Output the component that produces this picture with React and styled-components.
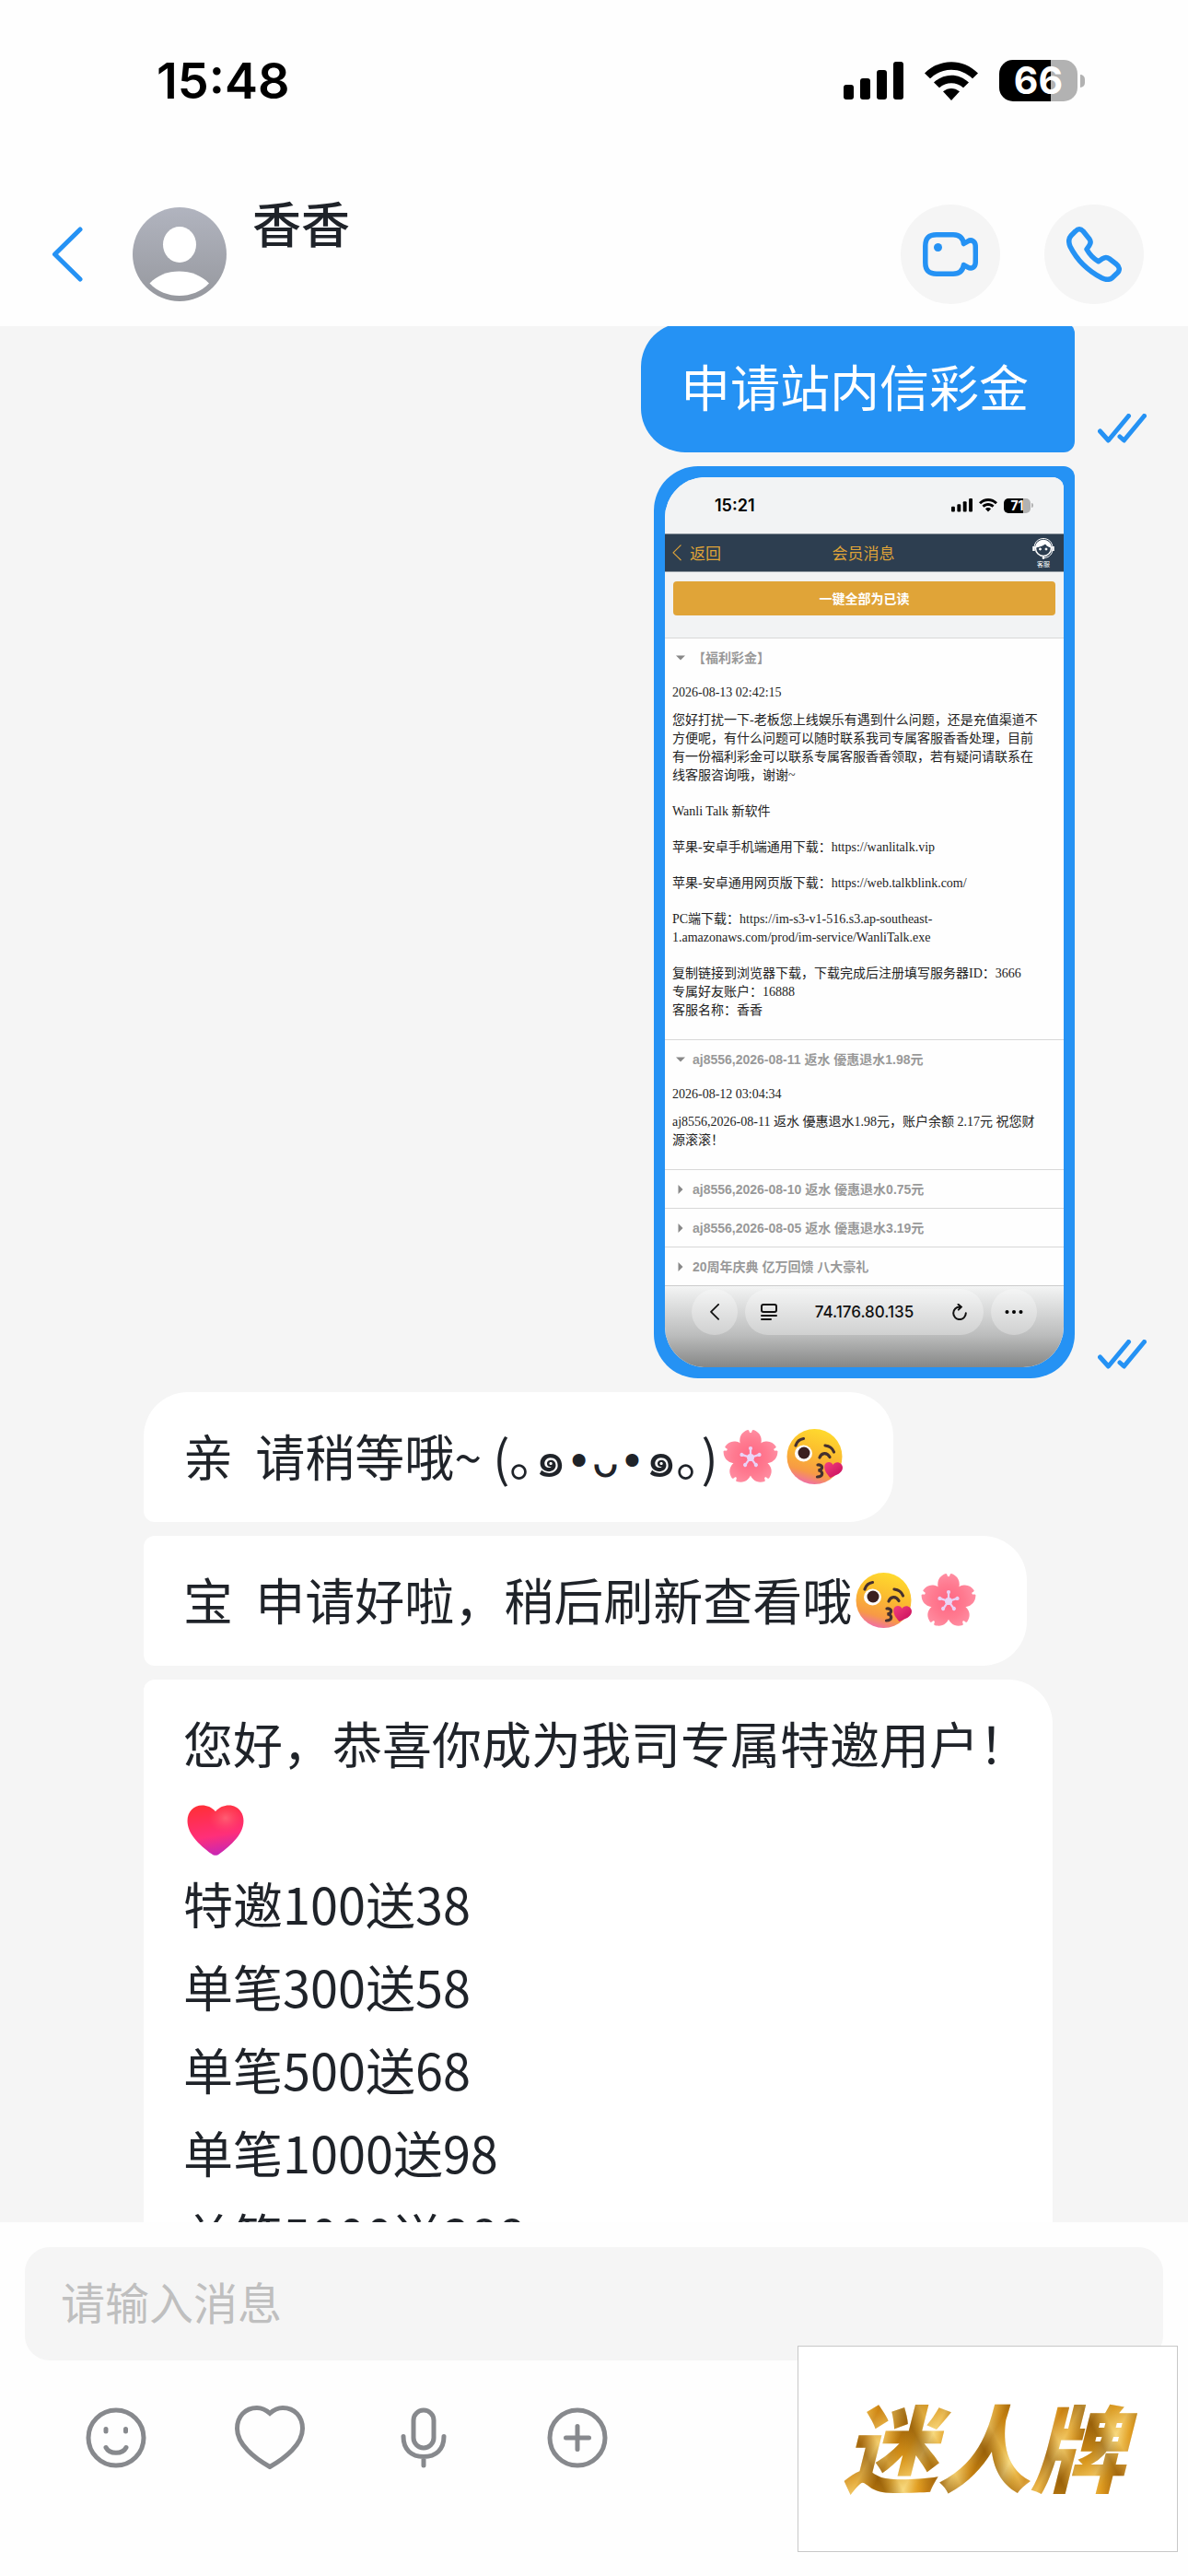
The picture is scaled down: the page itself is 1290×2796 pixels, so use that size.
import React, { useLayoutEffect, useRef, useState } from 'react';
import styled, { createGlobalStyle } from 'styled-components';

const BLUE = '#2592f4';

const sections = [
  {
    title: '【福利彩金】',
    date: '2026-08-13 02:42:15',
    paragraphs: [
      [
        '您好打扰一下-老板您上线娱乐有遇到什么问题，还是充值渠道不',
        '方便呢，有什么问题可以随时联系我司专属客服香香处理，目前',
        '有一份福利彩金可以联系专属客服香香领取，若有疑问请联系在',
        '线客服咨询哦，谢谢~',
      ],
      ['Wanli Talk 新软件'],
      ['苹果-安卓手机端通用下载：https://wanlitalk.vip'],
      ['苹果-安卓通用网页版下载：https://web.talkblink.com/'],
      [
        'PC端下载：https://im-s3-v1-516.s3.ap-southeast-',
        '1.amazonaws.com/prod/im-service/WanliTalk.exe',
      ],
      [
        '复制链接到浏览器下载，下载完成后注册填写服务器ID：3666',
        '专属好友账户：16888',
        '客服名称：香香',
      ],
    ],
  },
  {
    title: 'aj8556,2026-08-11 返水 優惠退水1.98元',
    date: '2026-08-12 03:04:34',
    paragraphs: [
      [
        'aj8556,2026-08-11 返水 優惠退水1.98元，账户余额 2.17元 祝您财',
        '源滚滚！',
      ],
    ],
  },
  { title: 'aj8556,2026-08-10 返水 優惠退水0.75元' },
  { title: 'aj8556,2026-08-05 返水 優惠退水3.19元' },
  { title: '20周年庆典 亿万回馈 八大豪礼' },
];

const offers = [
  '特邀100送38',
  '单笔300送58',
  '单笔500送68',
  '单笔1000送98',
  '单笔5000送288',
];

const Signal = ({ width }) => (
  <svg width={width} viewBox="0 0 65 41" aria-hidden="true">
    <rect x="0" y="25" width="11" height="16" rx="3" />
    <rect x="18" y="18" width="11" height="23" rx="3" />
    <rect x="36" y="9" width="11" height="32" rx="3" />
    <rect x="54" y="0" width="11" height="41" rx="3" />
  </svg>
);

const Wifi = ({ width }) => (
  <svg width={width} viewBox="0 0 58 42" aria-hidden="true">
    <path d="M0 12.5C16 -4 42 -4 58 12.5L52 18.3C39 5.5 19 5.5 6 18.3Z" />
    <path d="M10 22.5C21 12 37 12 48 22.5L42 28.3C34.500 21.5 23.500 21.5 16 28.3Z" />
    <path d="M20 32.3C25.500 27.800 32.500 27.800 38 32.300L29 42Z" />
  </svg>
);

const Chevron = ({ width, stroke }) => (
  <svg width={width} viewBox="0 0 34 60" fill="none" aria-hidden="true">
    <path
      d="M31 3L3.500 30L31 57"
      stroke="currentColor"
      strokeWidth={stroke}
      strokeLinecap="round"
      strokeLinejoin="round"
    />
  </svg>
);

const Ticks = () => (
  <TickIcon viewBox="0 0 53 32" aria-label="已读">
    <path d="M2.500 19L11.500 29L33.500 2.500M24 25L28.500 29L50.500 2.500" />
  </TickIcon>
);

const AvatarIcon = () => (
  <svg width="102" height="102" viewBox="0 0 102 102" aria-hidden="true">
    <defs>
      <linearGradient id="avatar" x1="0" y1="0" x2="0" y2="1">
        <stop offset="0" stopColor="#b1b4bf" />
        <stop offset="1" stopColor="#96989e" />
      </linearGradient>
    </defs>
    <circle cx="51" cy="51" r="51" fill="url(#avatar)" />
    <ellipse cx="51" cy="40.500" rx="18" ry="19.500" fill="#fff" />
    <path
      d="M18.500 82.500C34 65 67 65 83 82.500C66 100.500 35.500 100.500 18.500 82.500Z"
      fill="#fff"
    />
  </svg>
);

const Flower = () => (
  <Emoji viewBox="0 0 60 60" role="img" aria-label="🌸">
    <defs>
      <radialGradient id="petal" gradientUnits="userSpaceOnUse" cx="30" cy="31" r="30">
        <stop offset="0" stopColor="#ff6583" />
        <stop offset="0.6" stopColor="#ff7a90" />
        <stop offset="1" stopColor="#ff8da2" />
      </radialGradient>
    </defs>
    {[0, 72, 144, 216, 288].map((angle) => (
      <path
        key={angle}
        transform={`rotate(${angle} 30 31)`}
        d="M30 33C22 25 17 17 18.500 10C19.500 5 23 2.500 27 1C28 0.800 28.500 2 28.800 3.500C29.400 4.600 30.600 4.600 31.200 3.500C31.500 2 32 0.800 33 1C37 2.500 40.500 5 41.500 10C43 17 38 25 30 33Z"
        fill="url(#petal)"
      />
    ))}
    <g stroke="#e9d3f7" strokeWidth="2.200" fill="#ead6f8">
      {[0, 72, 144, 216, 288].map((angle) => (
        <g key={angle} transform={`rotate(${angle} 30 31)`}>
          <path d="M30 31V21" />
          <circle cx="30" cy="21" r="1" />
        </g>
      ))}
      <circle cx="30" cy="31" r="4" stroke="none" />
    </g>
  </Emoji>
);

const Kiss = () => (
  <Emoji viewBox="0 0 62 60" role="img" aria-label="😘">
    <defs>
      <linearGradient id="face" x1="0.7" y1="0" x2="0.4" y2="1">
        <stop offset="0" stopColor="#ffdc2e" />
        <stop offset="0.45" stopColor="#fbbb2f" />
        <stop offset="0.8" stopColor="#f79a45" />
        <stop offset="1" stopColor="#f06fa5" />
      </linearGradient>
      <linearGradient id="lips" x1="0" y1="0" x2="1" y2="1">
        <stop offset="0" stopColor="#f5407c" />
        <stop offset="1" stopColor="#c50c5c" />
      </linearGradient>
    </defs>
    <circle cx="30.500" cy="30" r="30" fill="url(#face)" />
    <ellipse cx="18.500" cy="26.500" rx="9.500" ry="9" fill="#fff" />
    <circle cx="19" cy="26" r="6.500" fill="#3b2020" />
    <g fill="none" stroke="#45302f" strokeWidth="3.200" strokeLinecap="round">
      <path d="M10 18C11.500 13.500 14.500 11 18.500 10.500" />
      <path d="M42 18C46.500 18.500 50 21 51.500 25" />
      <path d="M36 31C38 25.500 44 25 47 30.500" />
      <path d="M34 39C40 38.500 40 44 34.500 45C40.500 45.500 40 52 33.500 52" />
    </g>
    <path
      d="M50.500 39C53 34 61 36 61 42C61 48 54 50 47.500 53C44 49 40 44 41.500 39C43 35 49 35 50.500 39Z"
      fill="url(#lips)"
    />
  </Emoji>
);

const RedHeart = () => (
  <Emoji viewBox="0 0 60 56" role="img" aria-label="❤️">
    <defs>
      <linearGradient id="love" x1="0.4" y1="0" x2="0.6" y2="1">
        <stop offset="0" stopColor="#ff2f3a" />
        <stop offset="0.6" stopColor="#ff2f79" />
        <stop offset="1" stopColor="#c426b8" />
      </linearGradient>
      <radialGradient id="shine" cx="0.68" cy="0.25" r="0.3">
        <stop offset="0" stopColor="#ff8d8d" stopOpacity="0.500" />
        <stop offset="1" stopColor="#ff5a6b" stopOpacity="0" />
      </radialGradient>
    </defs>
    {['love', 'shine'].map((fill) => (
      <path
        key={fill}
        d="M30 8C26 3.500 21 1.500 16 1.500C7 1.500 0.500 8.500 0.500 17.500C0.500 31 12 42 26 52.500C28.500 54.500 31.500 54.500 34 52.500C48 42 59.500 31 59.500 17.500C59.500 8.500 53 1.500 44 1.500C39 1.500 34 3.500 30 8Z"
        fill={`url(#${fill})`}
      />
    ))}
  </Emoji>
);

const StatusBar = () => (
  <Status>
    <Clock>15:48</Clock>
    <StatusIcons>
      <Signal width={65} />
      <Wifi width={58} />
      <BatteryWrap>
        <Battery $level={66}>66</Battery>
        <BatteryCap />
      </BatteryWrap>
    </StatusIcons>
  </Status>
);

const Header = () => (
  <HeaderBar>
    <PlainButton aria-label="返回">
      <Chevron width={34} stroke={5} />
    </PlainButton>
    <Contact>
      <AvatarIcon />
      <Name>香香</Name>
    </Contact>
    <CallButton aria-label="视频通话">
      <svg width="60" height="48" viewBox="0 0 60 48" fill="none">
        <path
          d="M44.500 12.500C43.500 6 39.500 2.800 33 2.800H15C6.500 2.800 2.800 6.500 2.800 15V33C2.800 41.500 6.500 45.200 15 45.200H33C39.500 45.200 43.500 42 44.500 35.500L49 38.200C53 40.500 56.800 38 57.200 33.500C57.400 27 57.400 21 57.200 14.500C56.800 10 53 7.500 49 9.800Z"
          stroke="currentColor"
          strokeWidth="5.500"
          strokeLinejoin="round"
        />
        <circle cx="16.500" cy="16.500" r="4.500" fill="currentColor" />
      </svg>
    </CallButton>
    <CallButton aria-label="语音通话">
      <svg width="60" height="60" viewBox="0 0 60 60" fill="none">
        <path
          d="M10 4.800C12.500 2.200 15.500 2.200 18 4.800L25 13.500C26.800 16 26.500 18 24.800 20.500L22 24.500C25 30 29 34.500 34.800 37.800L39.500 34.600C42 33 44 33 46.500 34.800L54 40.500C58 43.600 58.200 47.200 55.500 50L50 55.300C46.800 58 43 58 38.500 55.800C22.500 47.500 10.500 34.500 4 21.500C2 16.500 2 13 5 9.800Z"
          stroke="currentColor"
          strokeWidth="5.500"
          strokeLinejoin="round"
        />
      </svg>
    </CallButton>
  </HeaderBar>
);

const Section = ({ section }) => (
  <Item>
    <ItemHead>
      <Arrow viewBox="0 0 8 8" aria-hidden="true">
        <path d={section.date ? 'M0 2H8L4 6Z' : 'M2 0V8L6 4Z'} />
      </Arrow>
      {section.title}
    </ItemHead>
    {section.date && (
      <ItemBody>
        <span>{section.date}</span>
        <Paragraphs>
          {section.paragraphs.map((lines) => (
            <p key={lines[0]}>{lines.join('\n')}</p>
          ))}
        </Paragraphs>
      </ItemBody>
    )}
  </Item>
);

const Screenshot = () => (
  <Shot>
    <ShotStatus>
      <ShotClock>15:21</ShotClock>
      <ShotIcons>
        <Signal width={23} />
        <Wifi width={20} />
        <BatteryWrap $small>
          <Battery $small $level={71}>71</Battery>
          <BatteryCap $small />
        </BatteryWrap>
      </ShotIcons>
    </ShotStatus>
    <ShotNav>
      <BackLink>
        <Chevron width={10} stroke={4} />
        返回
      </BackLink>
      <span>会员消息</span>
      <Service>
        <svg width="24" height="24" viewBox="0 0 24 24" fill="none" stroke="#fff">
          <circle cx="12" cy="12" r="8.500" strokeWidth="1.500" />
          <path d="M2 12C2 -2 22 -2 22 12" strokeWidth="1" />
          <path d="M1.500 10V15M22.500 10V15" strokeWidth="2.500" />
          <path d="M22 14C21 20 17 22.500 12 22.500" />
          <path d="M4 11C5 2 18 1 20 11C17 10 15 9 14 7C12 9 8 10 4 11Z" fill="#fff" />
          <circle cx="8.500" cy="13" r="1" fill="#fff" />
          <circle cx="15" cy="13" r="1" fill="#fff" />
          <circle cx="12" cy="22.500" r="1" fill="#fff" />
        </svg>
        客服
      </Service>
    </ShotNav>
    <ReadAll>
      <ReadButton>一键全部为已读</ReadButton>
    </ReadAll>
    {sections.map((section) => (
      <Section key={section.title} section={section} />
    ))}
    <Browser>
      <RoundButton aria-label="后退">
        <Chevron width={10} stroke={6} />
      </RoundButton>
      <Address>
        <svg width="18" height="18" viewBox="0 0 18 18" fill="none" stroke="#111" strokeWidth="2" strokeLinecap="round">
          <rect x="1" y="1" width="16" height="8" rx="2" />
          <path d="M1 13H17M1 17H11" />
        </svg>
        <span>74.176.80.135</span>
        <svg width="18" height="18" viewBox="0 0 18 18" fill="none" stroke="#111" strokeWidth="2" strokeLinecap="round">
          <path d="M9 3.500A6.800 6.800 0 1 0 15.800 10.300M7.500 0.800L10.800 3.600L7.800 6.600" />
        </svg>
      </Address>
      <RoundButton aria-label="更多">
        <svg width="20" height="6" viewBox="0 0 20 6">
          <circle cx="2.500" cy="3" r="2" />
          <circle cx="10" cy="3" r="2" />
          <circle cx="17.500" cy="3" r="2" />
        </svg>
      </RoundButton>
    </Browser>
  </Shot>
);

const Composer = () => {
  const [text, setText] = useState('');

  return (
    <Footer>
      <MessageInput
        type="text"
        aria-label="消息"
        placeholder="请输入消息"
        value={text}
        onChange={(e) => setText(e.target.value)}
      />
      <Tools>
        <ToolButton aria-label="表情">
          <svg width="66" height="66" viewBox="0 0 66 66">
            <circle cx="33" cy="33" r="30" />
            <path d="M22 23.500V26M43.500 23.500V26M22 43.500C26 51.200 40 51.200 44 43.500" />
          </svg>
        </ToolButton>
        <ToolButton aria-label="收藏">
          <svg width="78" height="72" viewBox="0 0 78 72">
            <path
              strokeLinejoin="miter"
              d="M39 9.500C34 5 29 3.500 25 3.500C12 3.500 3.500 13 3.500 26C3.500 43 22 58 39 67.500C56 58 74.500 43 74.500 26C74.500 13 66 3.500 53 3.500C49 3.500 44 5 39 9.500Z"
            />
          </svg>
        </ToolButton>
        <ToolButton aria-label="语音">
          <svg width="50" height="66" viewBox="0 0 50 66">
            <rect x="14" y="3" width="22" height="41" rx="11" />
            <path d="M3 31.500C3 46 12 53.500 25 53.500C38 53.500 47 46 47 31.500M25 53.500V63" />
          </svg>
        </ToolButton>
        <ToolButton aria-label="更多功能">
          <svg width="66" height="66" viewBox="0 0 66 66">
            <circle cx="33" cy="33" r="30" />
            <path d="M20.500 33H45.500M33 20.500V45.500" />
          </svg>
        </ToolButton>
      </Tools>
      <Badge>
        <Brand>迷人牌</Brand>
      </Badge>
    </Footer>
  );
};

const App = () => {
  const chat = useRef(null);

  useLayoutEffect(() => {
    chat.current.scrollTop = 4;
  }, []);

  return (
    <Page>
      <GlobalStyle />
      <StatusBar />
      <Header />
      <Chat ref={chat}>
        <Sent>
          <Bubble $sent>
            <Line>申请站内信彩金</Line>
          </Bubble>
          <Ticks />
        </Sent>
        <Sent>
          <ImageBubble>
            <Screenshot />
          </ImageBubble>
          <Ticks />
        </Sent>
        <Bubble $first>
          <Line>
            {'亲  请稍等哦~ (｡๑'}
            <Cheeks>•ᴗ•</Cheeks>
            {'๑｡)'}
            <Flower />
            <Kiss />
          </Line>
        </Bubble>
        <Bubble>
          <Line>
            {'宝  申请好啦，稍后刷新查看哦'}
            <Kiss />
            <Flower />
          </Line>
        </Bubble>
        <Bubble>
          <Line>您好，恭喜你成为我司专属特邀用户！</Line>
          <EmojiLine>
            <RedHeart />
          </EmojiLine>
          {offers.map((offer) => (
            <Line key={offer}>{offer}</Line>
          ))}
        </Bubble>
      </Chat>
      <Composer />
    </Page>
  );
};

const GlobalStyle = createGlobalStyle`
  * {
    box-sizing: border-box;
  }

  body {
    margin: 0;
    background: #fefefe;
    font-family: 'Noto Sans CJK SC', sans-serif;
    color: #1f2329;
  }

  button {
    border: none;
    padding: 0;
    background: none;
    color: inherit;
    font: inherit;
    cursor: pointer;
  }

  svg {
    flex-shrink: 0;
  }
`;

const Page = styled.div`
  display: flex;
  flex-direction: column;
  height: 100vh;
`;

const Status = styled.div`
  display: flex;
  align-items: center;
  justify-content: space-between;
  height: 174px;
  flex-shrink: 0;
  padding: 1px 112px 0 170px;
  color: #000;
`;

const Clock = styled.span`
  font: 600 54px/60px Inter, sans-serif;
`;

const StatusIcons = styled.div`
  display: flex;
  align-items: center;
  gap: 23px;
`;

const BatteryWrap = styled.div`
  display: flex;
  align-items: center;
  gap: ${({ $small }) => ($small ? 1 : 3)}px;
`;

const Battery = styled.span`
  width: ${({ $small }) => ($small ? 29 : 85)}px;
  border-radius: ${({ $small }) => ($small ? 5 : 15)}px;
  background: linear-gradient(
    to right,
    #000 ${({ $level }) => $level}%,
    #b2b2b2 ${({ $level }) => $level}%
  );
  color: #fff;
  text-align: center;
  font-family: Inter, sans-serif;
  font-weight: 700;
  font-size: ${({ $small }) => ($small ? 14 : 41)}px;
  line-height: ${({ $small }) => ($small ? 16 : 45)}px;
`;

const BatteryCap = styled.span`
  width: ${({ $small }) => ($small ? 2 : 5)}px;
  height: ${({ $small }) => ($small ? 5 : 14)}px;
  border-radius: 0 8px 8px 0;
  background: #b2b2b2;
`;

const HeaderBar = styled.header`
  display: flex;
  align-items: center;
  flex-shrink: 0;
  gap: 48px;
  padding: 48px 48px 24px 56px;
`;

const PlainButton = styled.button`
  display: flex;
  color: ${BLUE};
`;

const Contact = styled.div`
  display: flex;
  flex: 1;
  gap: 28px;
  padding-left: 6px;
`;

const Name = styled.h1`
  margin: 0;
  font-size: 53px;
  font-weight: 500;
  line-height: 32px;
`;

const CallButton = styled.button`
  display: flex;
  align-items: center;
  justify-content: center;
  width: 108px;
  height: 108px;
  border-radius: 50%;
  background: #f5f5f5;
  color: ${BLUE};
`;

const Chat = styled.main`
  display: flex;
  flex: 1;
  flex-direction: column;
  align-items: flex-start;
  gap: 15px;
  min-height: 0;
  padding: 0 45px 0 156px;
  overflow-y: auto;
  scrollbar-width: none;
  background: #f5f5f5;
`;

const Sent = styled.div`
  display: flex;
  align-self: flex-end;
  align-items: flex-end;
  flex-shrink: 0;
  gap: 25px;
`;

const TickIcon = styled.svg`
  width: 53px;
  height: 32px;
  margin-bottom: 10px;
  fill: none;
  stroke: ${BLUE};
  stroke-width: 5;
  stroke-linecap: round;
  stroke-linejoin: round;
`;

const Bubble = styled.div`
  flex-shrink: 0;
  max-width: 987px;
  padding: 24px 50px 27px 43px;
  border-radius: ${({ $sent, $first }) =>
    $sent ? '48px 12px 12px 48px' : `${$first ? 48 : 12}px 48px 48px 12px`};
  background: ${({ $sent }) => ($sent ? BLUE : '#fff')};
  color: ${({ $sent }) => ($sent ? '#fff' : 'inherit')};
`;

const Line = styled.p`
  margin: 0;
  font-size: 54px;
  line-height: 90px;
  white-space: pre;
`;

const EmojiLine = styled(Line)`
  display: flex;
  align-items: flex-end;
  height: 84px;
  padding-bottom: 4px;
`;

const Cheeks = styled.span`
  font-family: 'DejaVu Sans', sans-serif;
  font-size: 48px;
  line-height: 1;
`;

const Emoji = styled.svg`
  width: 62px;
  height: 60px;
  margin: 0 4px;
  vertical-align: -8px;
`;

const ImageBubble = styled.div`
  padding: 12px;
  border-radius: 48px 12px 48px 48px;
  background: ${BLUE};
`;

const Shot = styled.div`
  width: 433px;
  overflow: hidden;
  border-radius: 44px 12px 44px 44px;
  background: #fefefe;
`;

const ShotStatus = styled.div`
  display: flex;
  align-items: center;
  justify-content: space-between;
  height: 61px;
  padding: 0 33px 0 54px;
  background: #f2f3f4;
  color: #000;
`;

const ShotClock = styled.span`
  font: 600 18px/20px Inter, sans-serif;
`;

const ShotIcons = styled.div`
  display: flex;
  align-items: center;
  gap: 7px;
`;

const ShotNav = styled.div`
  display: grid;
  grid-template-columns: 1fr auto 1fr;
  align-items: center;
  height: 42px;
  padding: 0 10px 0 8px;
  border-top: 1px solid #8d969f;
  border-bottom: 1px solid #8d969f;
  background: #2d3e50;
  color: #dfa338;
  font-size: 17px;
  line-height: 20px;
`;

const BackLink = styled.button`
  display: flex;
  align-items: center;
  gap: 9px;
`;

const Service = styled.button`
  display: flex;
  flex-direction: column;
  align-items: center;
  justify-self: end;
  color: #fff;
  font-size: 7px;
  line-height: 10px;
`;

const ReadAll = styled.div`
  padding: 10px 9px 24px;
  background: #f2f3f4;
`;

const ReadButton = styled.button`
  display: block;
  width: 100%;
  height: 37px;
  padding-bottom: 2px;
  border-radius: 4px;
  background: #e0a438;
  color: #fff;
  font-size: 14px;
  font-weight: 700;
`;

const Item = styled.section`
  border-top: 1px solid #d8d8d8;
`;

const ItemHead = styled.button`
  display: flex;
  align-items: center;
  gap: 8px;
  width: 100%;
  height: 41px;
  padding-left: 12px;
  color: #999;
  font: 600 14px/20px 'Liberation Sans', 'Noto Sans CJK SC', sans-serif;
`;

const Arrow = styled.svg`
  width: 10px;
  height: 10px;
  fill: #888;
`;

const ItemBody = styled.div`
  padding: 8px 8px 21px;
  color: #222;
  font: 14px/20px 'Liberation Serif', 'Noto Sans CJK SC', serif;
`;

const Paragraphs = styled.div`
  display: grid;
  gap: 19px;
  margin-top: 10px;

  p {
    margin: 0;
    white-space: pre-line;
  }
`;

const Browser = styled.div`
  display: flex;
  gap: 8px;
  padding: 3px 29px 35px;
  border-top: 1px solid #ccc;
  background: linear-gradient(#f3f4f4, #bcbdbd 60%, #868786);
`;

const RoundButton = styled.button`
  display: flex;
  align-items: center;
  justify-content: center;
  width: 50px;
  height: 50px;
  border-radius: 50%;
  background: rgba(255, 255, 255, 0.3);
  color: #111;
`;

const Address = styled.div`
  display: flex;
  flex: 1;
  align-items: center;
  justify-content: space-between;
  padding: 0 17px;
  border-radius: 25px;
  background: rgba(255, 255, 255, 0.3);
  color: #111;
  font: 500 17px/20px Inter, sans-serif;
`;

const Footer = styled.footer`
  position: relative;
  flex-shrink: 0;
  padding: 27px 27px 111px;
  background: #fefefe;
`;

const MessageInput = styled.input`
  display: block;
  width: 100%;
  height: 123px;
  border: none;
  border-radius: 27px;
  padding: 0 39px 8px;
  background: #f5f5f5;
  color: #1f2329;
  font: 48px 'Noto Sans CJK SC', sans-serif;

  &::placeholder {
    color: #bfbfbf;
  }

  &:focus {
    outline: none;
  }
`;

const Tools = styled.div`
  display: flex;
  gap: 89px;
  padding: 45px 0 0 60px;
`;

const ToolButton = styled.button`
  display: flex;
  align-items: center;
  justify-content: center;
  width: 78px;
  height: 78px;

  svg {
    fill: none;
    stroke: #87898d;
    stroke-width: 5;
    stroke-linecap: round;
  }
`;

const Badge = styled.div`
  position: absolute;
  right: 11px;
  bottom: 26px;
  display: flex;
  align-items: center;
  justify-content: center;
  width: 413px;
  height: 224px;
  border: 1px solid #c8c8c8;
  background: #fff;
`;

const Brand = styled.strong`
  padding: 0 16px 10px 8px;
  background:
    repeating-linear-gradient(
      62deg,
      rgba(122, 70, 0, 0.5) 0,
      rgba(255, 226, 140, 0.3) 18px,
      rgba(224, 140, 10, 0.3) 34px,
      rgba(122, 70, 0, 0.5) 58px
    ),
    repeating-linear-gradient(
      118deg,
      #b87a12 0,
      #d69a22 14px,
      #f5d77c 30px,
      #e2a62c 42px,
      #c8841a 54px,
      #efc763 70px,
      #b87a12 88px
    );
  background-clip: text;
  color: transparent;
  font-size: 102px;
  font-style: italic;
  font-weight: 900;
  line-height: 130px;
`;

export default App;
